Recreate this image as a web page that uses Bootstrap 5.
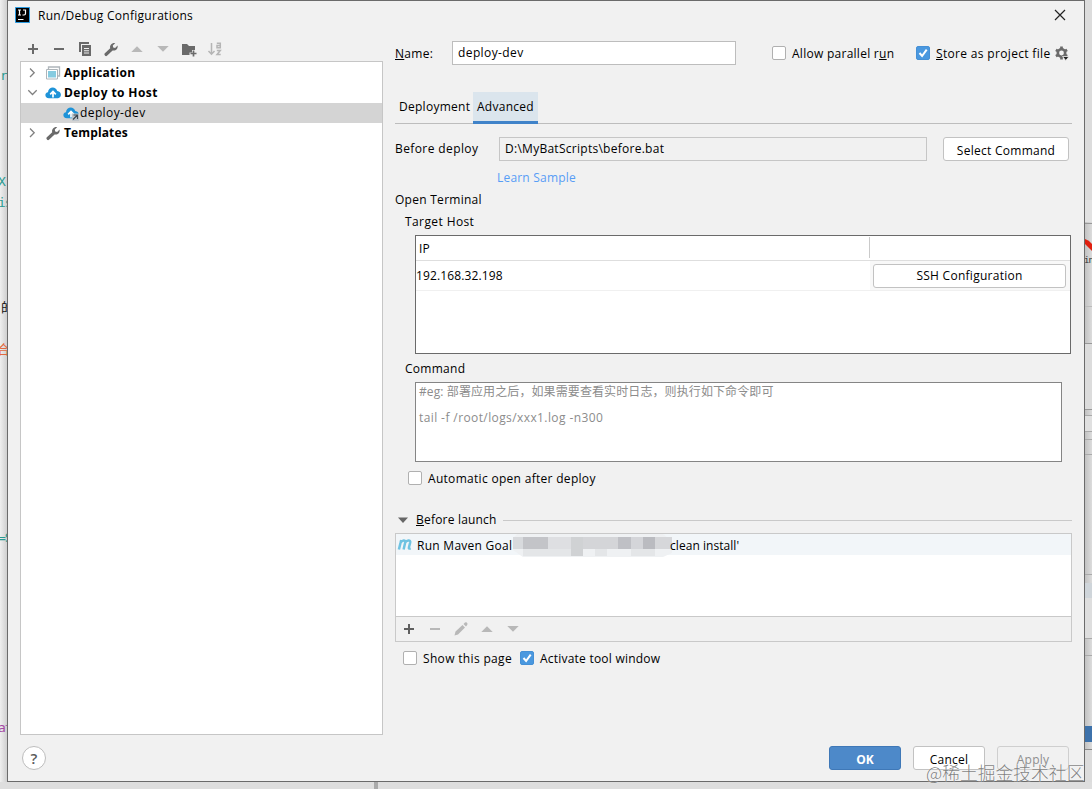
<!DOCTYPE html>
<html lang="en">
<head>
<meta charset="utf-8">
<meta name="viewport" content="width=device-width, initial-scale=1">
<title>Run/Debug Configurations</title>
<link href="https://cdn.jsdelivr.net/npm/bootstrap@5.3.0/dist/css/bootstrap.min.css" rel="stylesheet">
<style>
  body { height: 789px; overflow: hidden; background: #dedede; color: #000; font: 12px/20px "Open Sans", "Noto Sans CJK SC", sans-serif; letter-spacing: .27px; white-space: nowrap; }
  .ls-wide { letter-spacing: .4px; }
  .ls-slim { letter-spacing: .13px; }
  .screen { width: 1092px; height: 789px; position: relative; }
  .edge-l { width: 7px; height: 782px; background: linear-gradient(90deg, #efefef, #cfcfcf); overflow: hidden; position: relative; }
  .edge-r { width: 7px; height: 782px; background: linear-gradient(90deg, #c2c2c2, #dcdcdc); overflow: hidden; position: relative; }
  .frag { position: absolute; left: -2px; font: 13px/16px "DejaVu Sans Mono", "Noto Sans CJK SC", monospace; color: #2a9a90; letter-spacing: -1px; }
  .seam { position: absolute; left: 0; width: 7px; height: 1px; background: #aaa; }
  .dialog-box { width: 1078px; height: 782px; background: #f1f1f1; border: 1px solid #6b6b6b; padding: 0 12px; }
  .title-row { height: 38px; padding-top: 2px; }
  .title-row .title-text { font-size: 12px; margin-left: 7px; }
  .left-col { width: 363px; }
  .right-col { width: 677px; margin-left: 12px; }
  .tools { height: 22px; padding: 0 0 2px 5px; gap: 10px; }
  .tree { height: 674px; background: #fff; border: 1px solid #c6c6c6; padding-top: 1px; }
  .tree-row { height: 20px; line-height: 20px; }
  .tree-row.top { padding-left: 4px; }
  .tree-row b { margin-left: 3px; }
  .tree-row.chosen { background: #d4d4d4; padding-left: 42px; }
  .field { background: #fff; border: 1px solid #bdbdbd; height: 24px; line-height: 22px; padding: 0 5px; }
  .field.locked { background: #f1f1f1; border-color: #c6c6c6; }
  .tick { width: 14px; height: 14px; flex: none; background: #fff; border: 1px solid #b0b0b0; border-radius: 2px; }
  .tick.on { background: #4a98df; border-color: #4590d6; }
  .tick svg { display: block; margin: -1px; }
  .tick + span { padding-top: 1px; }
  .push { height: 24px; line-height: 23px; border: 1px solid #c2c2c2; border-radius: 3px; background: #fff; color: #000; padding: 1px 0 0; font-size: 12px; letter-spacing: .27px; }
  .push.main { background: #4d89c9; border-color: #3f78b7; color: #fff; font-weight: 700; letter-spacing: 0; }
  .push.off { background: #f1f1f1; color: #8e8e8e; border-color: #cfcfcf; }
  .name-row { height: 24px; margin-top: 2px; }
  .name-row label, .name-row .tick + span { padding-top: 2px; }
  .tab-row { height: 33px; margin-top: 26px; border-bottom: 1px solid #bdbdbd; line-height: 31px; }
  .tab-row .tab { padding: 0 4px; height: 32px; }
  .tab-row .tab.open { background: #dbe5ed; border-bottom: 3px solid #4083c9; margin-top: 1px; margin-bottom: -1px; line-height: 29px; width: 65px; height: 32px; }
  .host-table { margin: 3px 0 0 20px; width: 656px; height: 119px; background: #fff; border: 1px solid #6a6a6a; }
  .host-head { height: 25px; border-bottom: 1px solid #dedede; line-height: 26px; padding-left: 3px; }
  .host-head i { width: 1px; height: 21px; background: #cacaca; margin: 1px 200px 0 0; }
  .host-row { height: 30px; border-bottom: 1px solid #f0f0f0; line-height: 29px; }
  .host-row .cell-btn { background: #f8f8f8; width: 200px; padding: 3px 4px 0 3px; }
  .host-row .push { padding-top: 0; line-height: 22px; }
  .cmd-box { margin: 3px 0 0 20px; width: 647px; height: 80px; background: #fff; border: 1px solid #858585; padding: 0 3px; color: #8c8c8c; line-height: 26px; letter-spacing: .4px; }
  .cmd-box div:first-child { height: 22px; line-height: 17px; letter-spacing: .1px; }
  .launch-head { height: 20px; margin-top: 22px; }
  .launch-head hr { margin: 0 0 0 6px; border-top: 1px solid #c9c9c9; opacity: 1; }
  .launch-box { margin-top: 3px; height: 109px; border: 1px solid #c9c9c9; background: #fff; }
  .task { height: 21px; background: #f2f6f9; line-height: 23px; padding-left: 1px; }
  .veil { width: 160px; height: 25px; margin-left: -2px; }
  .launch-tools { height: 25px; border-top: 1px solid #c9c9c9; background: #f1f1f1; padding-left: 5px; gap: 10px; }
  .foot { height: 46px; padding: 11px 3px 0 2px; }
  .help { width: 24px; height: 24px; border: 1px solid #bdbdbd; border-radius: 50%; background: #fff; font: 600 15px/22px "Open Sans", sans-serif; color: #5a5a5a; letter-spacing: 0; }
  .stamp { position: absolute; left: 926px; top: 759px; font: 300 17.8px/26px "Noto Sans CJK SC", sans-serif; letter-spacing: 0; color: rgba(95,95,95,.8); text-shadow: 0 0 1px #fff; }
  svg { flex: none; }
</style>
</head>
<body>
<svg class="d-none">
  <symbol id="plus" viewBox="0 0 16 16"><path d="M8 3v10M3 8h10" stroke="currentColor" stroke-width="2"/></symbol>
  <symbol id="minus" viewBox="0 0 16 16"><path d="M3 8h10" stroke="currentColor" stroke-width="2"/></symbol>
  <symbol id="up" viewBox="0 0 16 16"><path d="M2.300 11 8 5.300 13.700 11z" fill="currentColor"/></symbol>
  <symbol id="down" viewBox="0 0 16 16"><path d="M2.300 5 8 10.700 13.700 5z" fill="currentColor"/></symbol>
  <symbol id="wrench" viewBox="0 0 16 16"><path d="M1.600 12.600 7.200 7.200C6.500 4.500 8.500 1.600 12.300 2L9.800 4.600l.4 1.900 1.900.4 2.500-2.500c.6 3.600-2.200 5.800-5 5L4 14.800q-1 .8-1.900-.1-1.200-1-.5-2.100z" fill="currentColor"/></symbol>
  <symbol id="check" viewBox="0 0 14 14"><path d="m3.500 7 2.600 3L10.700 3.600" fill="none" stroke="#fff" stroke-width="2"/></symbol>
  <symbol id="cloud" viewBox="0 0 16 16"><path d="M4 13.200C-.8 13.200-.5 7.300 3 7.200 3.200 1.600 11 .8 12.200 6.100c5 .2 4.600 7.100.8 7.100z" fill="#1e93d8"/><path d="M8 12.500V7M5.200 9.300 8 6.500l2.800 2.800" stroke="#fff" stroke-width="1.700" fill="none"/></symbol>
</svg>
<main class="screen d-flex">
  <div class="edge-l">
    <span class="frag" style="top:68px;left:0">r</span>
    <span class="frag" style="top:174px">X:</span>
    <span class="frag" style="top:195px">is</span>
    <span class="frag" style="top:300px;left:1px;color:#111">的</span>
    <span class="frag" style="top:342px;left:-3px;color:#e2693f">合</span>
    <span class="frag" style="top:530px">=S</span>
    <span class="frag" style="top:720px;color:#a44aa4">at</span>
  </div>
  <section class="dialog-box d-flex flex-column">
    <header class="title-row d-flex">
      <svg class="mt-1" width="17" height="16" viewBox="0 0 17 16" style="margin-left:-6px"><path d="M1.500.5h14v15h-14z" fill="#000" stroke="#2c9be0"/><path d="M4 3h3M5.500 3v5M4 8h3M9 3h2.500v3.500q0 1.500-1.500 1.500H8.500M4 12.500h5.500" stroke="#fff" stroke-width="1.200" fill="none"/></svg>
      <span class="title-text lh-sm" style="margin-top:5px">Run/Debug Configurations</span>
      <svg class="ms-auto" style="margin-top:6px;margin-right:6px" width="12" height="12" viewBox="0 0 12 12"><path d="m1 1 10 10M11 1 1 11" stroke="#222" stroke-width="1.200"/></svg>
    </header>
    <div class="d-flex">
      <div class="left-col">
        <div class="tools d-flex align-items-center" style="color:#6a6a6a">
          <svg width="16" height="16"><use href="#plus"/></svg>
          <svg width="16" height="16"><use href="#minus"/></svg>
          <svg width="16" height="16" viewBox="0 0 16 16"><path d="M3 11V2h9" fill="none" stroke="currentColor" stroke-width="2"/><path d="M5 4h9v11H5zM7 7v1h5V7zM7 9.300v1h5v-1zM7 11.600v1h5v-1z" fill="currentColor" fill-rule="evenodd"/></svg>
          <svg width="16" height="16"><use href="#wrench"/></svg>
          <svg width="16" height="16" color="#b8b8b8"><use href="#up"/></svg>
          <svg width="16" height="16" color="#b8b8b8"><use href="#down"/></svg>
          <svg width="16" height="16" viewBox="0 0 16 16"><path d="M1 3h5l2 2h6v4h-3v2.500H8.500V14H1z" fill="currentColor"/><path d="M12.500 9.500v6M9.500 12.500h6" stroke="currentColor" stroke-width="1.700"/></svg>
          <svg width="16" height="16" viewBox="0 0 16 16" fill="none" stroke="#b5b5b5" stroke-width="1.500"><path d="M4.500 2v11M1.500 10l3 3.200 3-3.200"/><path d="M9.800 2.200h3.500v4.500H10V4.500h3M9.800 9.500h3.500l-3.300 4h3.700"/></svg>
        </div>
        <div class="tree">
          <div class="tree-row top d-flex align-items-center">
            <svg width="16" height="16" viewBox="0 0 16 16"><path d="m5 3.500 4.200 4.200L5 12" fill="none" stroke="#808080" stroke-width="1.300"/></svg>
            <svg class="ms-1" width="16" height="16" viewBox="0 0 16 16"><path d="M3.500 4V2h11v9H13" fill="none" stroke="#aeb5ba" stroke-width="1.300"/><path d="M1.500 4.500h11v9.500h-11z" fill="#fff" stroke="#aeb5ba"/><path d="M3 6h8v6.500H3z" fill="#86cbe0"/></svg>
            <b>Application</b>
          </div>
          <div class="tree-row top d-flex align-items-center">
            <svg width="16" height="16" viewBox="0 0 16 16"><path d="m3.300 5.300 4.200 4.200 4.200-4.200" fill="none" stroke="#808080" stroke-width="1.300"/></svg>
            <svg class="ms-1" width="16" height="16"><use href="#cloud"/></svg>
            <b class="ls-wide">Deploy to Host</b>
          </div>
          <div class="tree-row chosen d-flex align-items-center">
            <svg width="16" height="16" viewBox="0 0 16 16"><use href="#cloud"/><path d="M9 8.500h7V16H9z" fill="#bfc6cc"/><path d="M10.500 10h4v4M14.500 10 10 14.500" stroke="#3d4650" stroke-width="1.200" fill="none"/></svg>
            <span class="ls-wide" style="margin-left:1px">deploy-dev</span>
          </div>
          <div class="tree-row top d-flex align-items-center">
            <svg width="16" height="16" viewBox="0 0 16 16"><path d="m5 3.500 4.200 4.200L5 12" fill="none" stroke="#808080" stroke-width="1.300"/></svg>
            <svg class="ms-1" width="16" height="16" color="#6a6a6a"><use href="#wrench"/></svg>
            <b class="ls-slim">Templates</b>
          </div>
        </div>
      </div>
      <div class="right-col">
        <div class="name-row d-flex align-items-center">
          <label style="width:57px"><u>N</u>ame:</label>
          <div class="field ls-wide" style="width:284px">deploy-dev</div>
          <span class="tick" style="margin-left:36px"></span>
          <span style="margin-left:6px;width:124px">Allow parallel r<u>u</u>n</span>
          <span class="tick on"><svg width="14" height="14"><use href="#check"/></svg></span>
          <span style="margin-left:6px;width:118px;letter-spacing:.33px"><u>S</u>tore as project file</span>
          <svg width="16" height="16" viewBox="0 0 16 16"><circle cx="7.500" cy="8" r="3.700" fill="none" stroke="#6a6a6a" stroke-width="2.600"/><path d="M7.500 1.500V4M7.500 12v2.500M1.900 4.800 4 6M11 10l2.100 1.200M1.900 11.200 4 10M11 6l2.100-1.200" stroke="#6a6a6a" stroke-width="2.700"/><path d="M8.500 11.500H15l-3.200 4z" fill="#222" stroke="#f1f1f1" stroke-width=".8"/></svg>
        </div>
        <div class="tab-row d-flex">
          <span class="tab" style="width:78px">Deployment</span>
          <span class="tab open">Advanced</span>
        </div>
        <div class="d-flex align-items-center" style="margin-top:13px">
          <label class="ls-wide" style="width:104px">Before deploy</label>
          <div class="field locked" style="width:428px;line-height:21px">D:\MyBatScripts\before.bat</div>
          <button class="btn push" style="width:126px;margin-left:16px">Select Command</button>
        </div>
        <div style="margin:7px 0 0 102px;color:#589df6;letter-spacing:.2px">Learn Sample</div>
        <div style="margin-top:2px">Open Terminal</div>
        <div class="ls-wide" style="margin:2px 0 0 10px">Target Host</div>
        <div class="host-table">
          <div class="host-head d-flex justify-content-between"><span>IP</span><i></i></div>
          <div class="host-row d-flex justify-content-between"><span class="ls-slim">192.168.32.198</span>
            <div class="cell-btn"><button class="btn push w-100 d-block">SSH Configuration</button></div></div>
        </div>
        <div style="margin:5px 0 0 10px">Command</div>
        <div class="cmd-box"><div>#eg: 部署应用之后，如果需要查看实时日志，则执行如下命令即可</div><div>tail -f /root/logs/xxx1.log -n300</div></div>
        <div class="d-flex align-items-center" style="margin:6px 0 0 13px;height:20px"><span class="tick"></span><span style="margin-left:6px;padding-top:2px;letter-spacing:.3px">Automatic open after deploy</span></div>
        <div class="launch-head d-flex align-items-center">
          <svg width="16" height="16" viewBox="0 0 16 16"><path d="M3 5.500h10L8 11z" fill="#666"/></svg>
          <span style="margin-left:5px;letter-spacing:.2px"><u>B</u>efore launch</span><hr class="flex-grow-1">
        </div>
        <div class="launch-box d-flex flex-column">
          <div class="task d-flex">
            <svg style="margin-top:3px" width="16" height="16" viewBox="0 0 16 16"><path d="m1.500 13 2.300-9.500M3 6.500C4.500 3.500 8.500 3 7.800 6L6.200 13M7.500 6.500c1.500-3 6-3.500 5.300-.5l-1.300 5q-.4 1.600 1.800.8" transform="translate(.4 -.5)" fill="none" stroke="#6fc3e2" stroke-width="2.500"/></svg>
            <span style="margin-left:4px;width:98px">Run Maven Goal</span>
            <svg class="veil" width="160" height="25" viewBox="0 0 160 25"><path d="M4 0h146l9 8v11l-9 4H10L0 16V4z" fill="#eff1f3"/><path d="M0 3h10v12H0z" fill="#d8dadd"/><path d="M10 3h25v12H10z" fill="#c3c4c8"/><path d="M35 3h23v12H35z" fill="#dedfe2"/><path d="M58 3h12v19H58z" fill="#d0d2d4"/><path d="M70 3h35v12H70z" fill="#d4d5d8"/><path d="M105 3h13v12h-13z" fill="#bfc0c5"/><path d="M118 3h12v12h-12z" fill="#d4d5d9"/><path d="M130 3h12v12h-12z" fill="#babbc0"/><path d="M142 3h17v12h-17z" fill="#d6d7da"/><path d="M10 15h48v7H10zM82 15h12v7H82zM118 15h24v7h-24z" fill="#e4e6e8"/></svg>
            <span style="margin-left:-3px;letter-spacing:.05px">clean install'</span>
          </div>
          <div class="launch-tools d-flex align-items-center mt-auto" style="color:#b8b8b8">
            <svg width="16" height="16" color="#5f5f5f"><use href="#plus"/></svg>
            <svg width="16" height="16"><use href="#minus"/></svg>
            <svg width="16" height="16" viewBox="0 0 16 16"><path d="m1.500 14.500 1-4L9.500 4 12 6.500l-7 7zM10.500 3 12 1.600q1-.7 1.800 0 1.300 1.100.4 2.300L13 5.500z" fill="currentColor"/></svg>
            <svg width="16" height="16"><use href="#up"/></svg>
            <svg width="16" height="16"><use href="#down"/></svg>
          </div>
        </div>
        <div class="d-flex align-items-center" style="margin:6px 0 0 8px;height:20px"><span class="tick"></span><span style="margin-left:6px;width:97px;letter-spacing:.33px">Show this page</span><span class="tick on"><svg width="14" height="14"><use href="#check"/></svg></span><span style="margin-left:6px;letter-spacing:.22px">Activate tool window</span></div>
      </div>
    </div>
    <footer class="foot d-flex">
      <div class="help text-center">?</div>
      <button class="btn push main ms-auto" style="width:72px">OK</button>
      <button class="btn push" style="width:72px;margin-left:12px">Cancel</button>
      <button class="btn push off" style="width:72px;margin-left:12px">Apply</button>
    </footer>
  </section>
  <div class="edge-r">
    <i class="seam" style="top:0;height:200px;background:#dcdcdc"></i>
    <i class="seam" style="top:200px;height:22px;background:#e2e2e2"></i>
    <i class="seam" style="top:223px;background:#999"></i>
    <svg class="position-absolute start-0" style="top:236px" width="7" height="16"><path d="M0 3q4 1 7 5v7L0 8z" fill="#e02010"/></svg>
    <span class="frag" style="top:252px;left:-1px;font-size:9px;color:#333">in</span>
    <i class="seam" style="top:306px;background:#bbb"></i>
    <i class="seam" style="top:343px;background:#999"></i>
    <i class="seam" style="top:344px;height:65px;background:#dcdcdc"></i>
    <i class="seam" style="top:409px;background:#999"></i>
    <i class="seam" style="top:415px;height:17px;background:#e0e0e0;border:solid #aaa;border-width:1px 0"></i>
    <i class="seam" style="top:439px"></i>
    <i class="seam" style="top:454px"></i>
    <i class="seam" style="top:574px"></i>
    <i class="seam" style="top:583px;height:15px;background:#cfd5da"></i>
    <i class="seam" style="top:598px;height:40px;background:#dedede"></i>
    <i class="seam" style="top:638px"></i>
    <i class="seam" style="top:655px"></i>
    <i class="seam" style="top:726px;height:16px;background:#3d72ab"></i>
    <i class="seam" style="top:749px;background:#888"></i>
    <i class="seam" style="top:750px;height:32px;background:#dcdcdc"></i>
  </div>
  <div class="position-absolute" style="left:374px;top:782px;width:4px;height:7px;background:#aaa"></div>
  <div class="stamp">@稀土掘金技术社区</div>
</main>
<script src="https://cdn.jsdelivr.net/npm/bootstrap@5.3.0/dist/js/bootstrap.bundle.min.js"></script>
</body>
</html>
